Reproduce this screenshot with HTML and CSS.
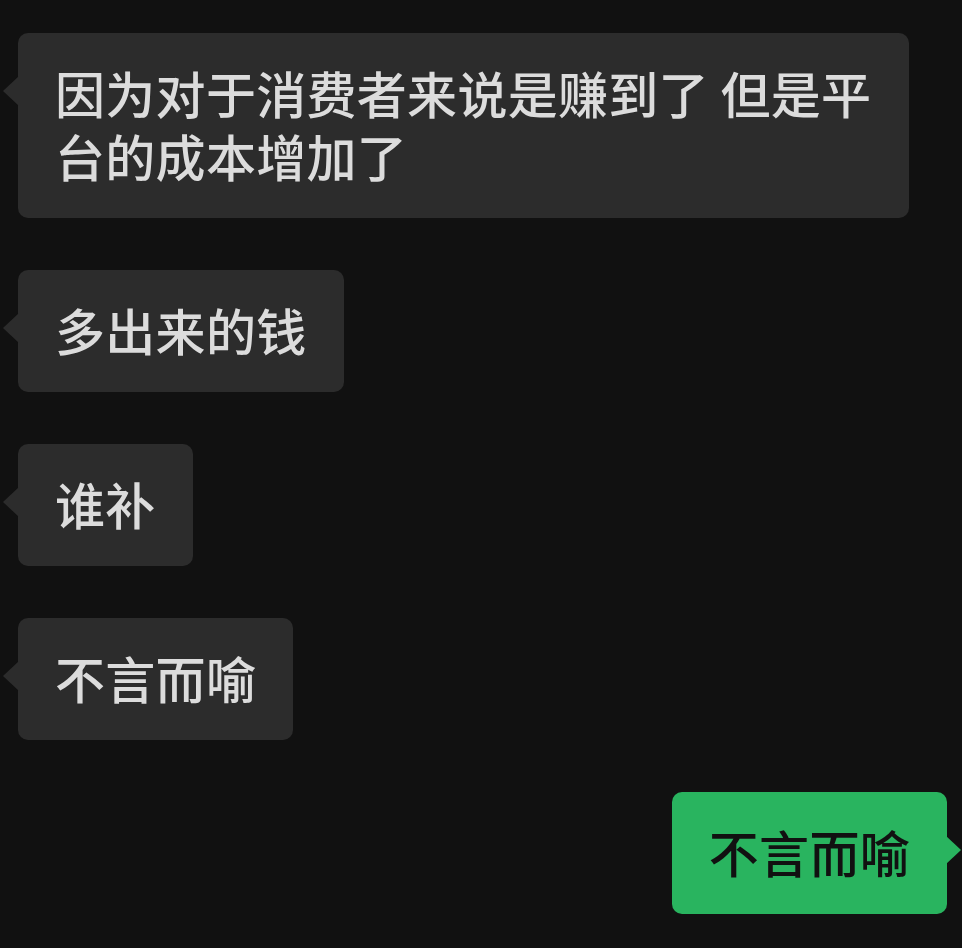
FILE: index.html
```html
<!DOCTYPE html>
<html lang="zh-CN">
<head>
  <meta charset="UTF-8" />
  <title>聊天</title>
  <meta name="viewport" content="width=device-width, initial-scale=1.0" />
  <link rel="stylesheet" href="styles.css">
</head>
<body>
  <div class="chat">
    <div class="msg left">
      <div class="bubble">因为对于消费者来说是赚到了 但是平台的成本增加了</div>
    </div>
    <div class="msg left">
      <div class="bubble">多出来的钱</div>
    </div>
    <div class="msg left">
      <div class="bubble">谁补</div>
    </div>
    <div class="msg left">
      <div class="bubble">不言而喻</div>
    </div>
    <div class="msg right">
      <div class="bubble">不言而喻</div>
    </div>
  </div>
</body>
</html>
```

FILE: styles.css
```css
html, body {
  margin: 0;
  padding: 0;
  background: #111111;
}
body {
  font-family: "Noto Sans CJK SC", "Noto Sans", sans-serif;
  width: 962px;
  height: 948px;
  overflow: hidden;
}
.chat {
  display: flex;
  flex-direction: column;
  gap: 52px;
  padding: 33px 15px 0 18px;
}
.msg {
  display: flex;
}
.msg.right {
  justify-content: flex-end;
}
.bubble {
  position: relative;
  max-width: 817px;
  padding: 28px 37px 31px 37px;
  border-radius: 10px;
  font-size: 50px;
  font-weight: 500;
  line-height: 63px;
  letter-spacing: 0.3px;
  background: #2c2c2c;
  color: #dcdcdc;
}
.bubble::before {
  content: "";
  position: absolute;
  top: 43px;
  width: 16px;
  height: 30px;
  background: inherit;
}
.left .bubble::before {
  left: -15px;
  clip-path: polygon(100% 0, 0 50%, 100% 100%);
}
.right .bubble {
  background: #29b45f;
  color: #111111;
}
.right .bubble::before {
  right: -14px;
  clip-path: polygon(0 0, 100% 50%, 0 100%);
}
```
